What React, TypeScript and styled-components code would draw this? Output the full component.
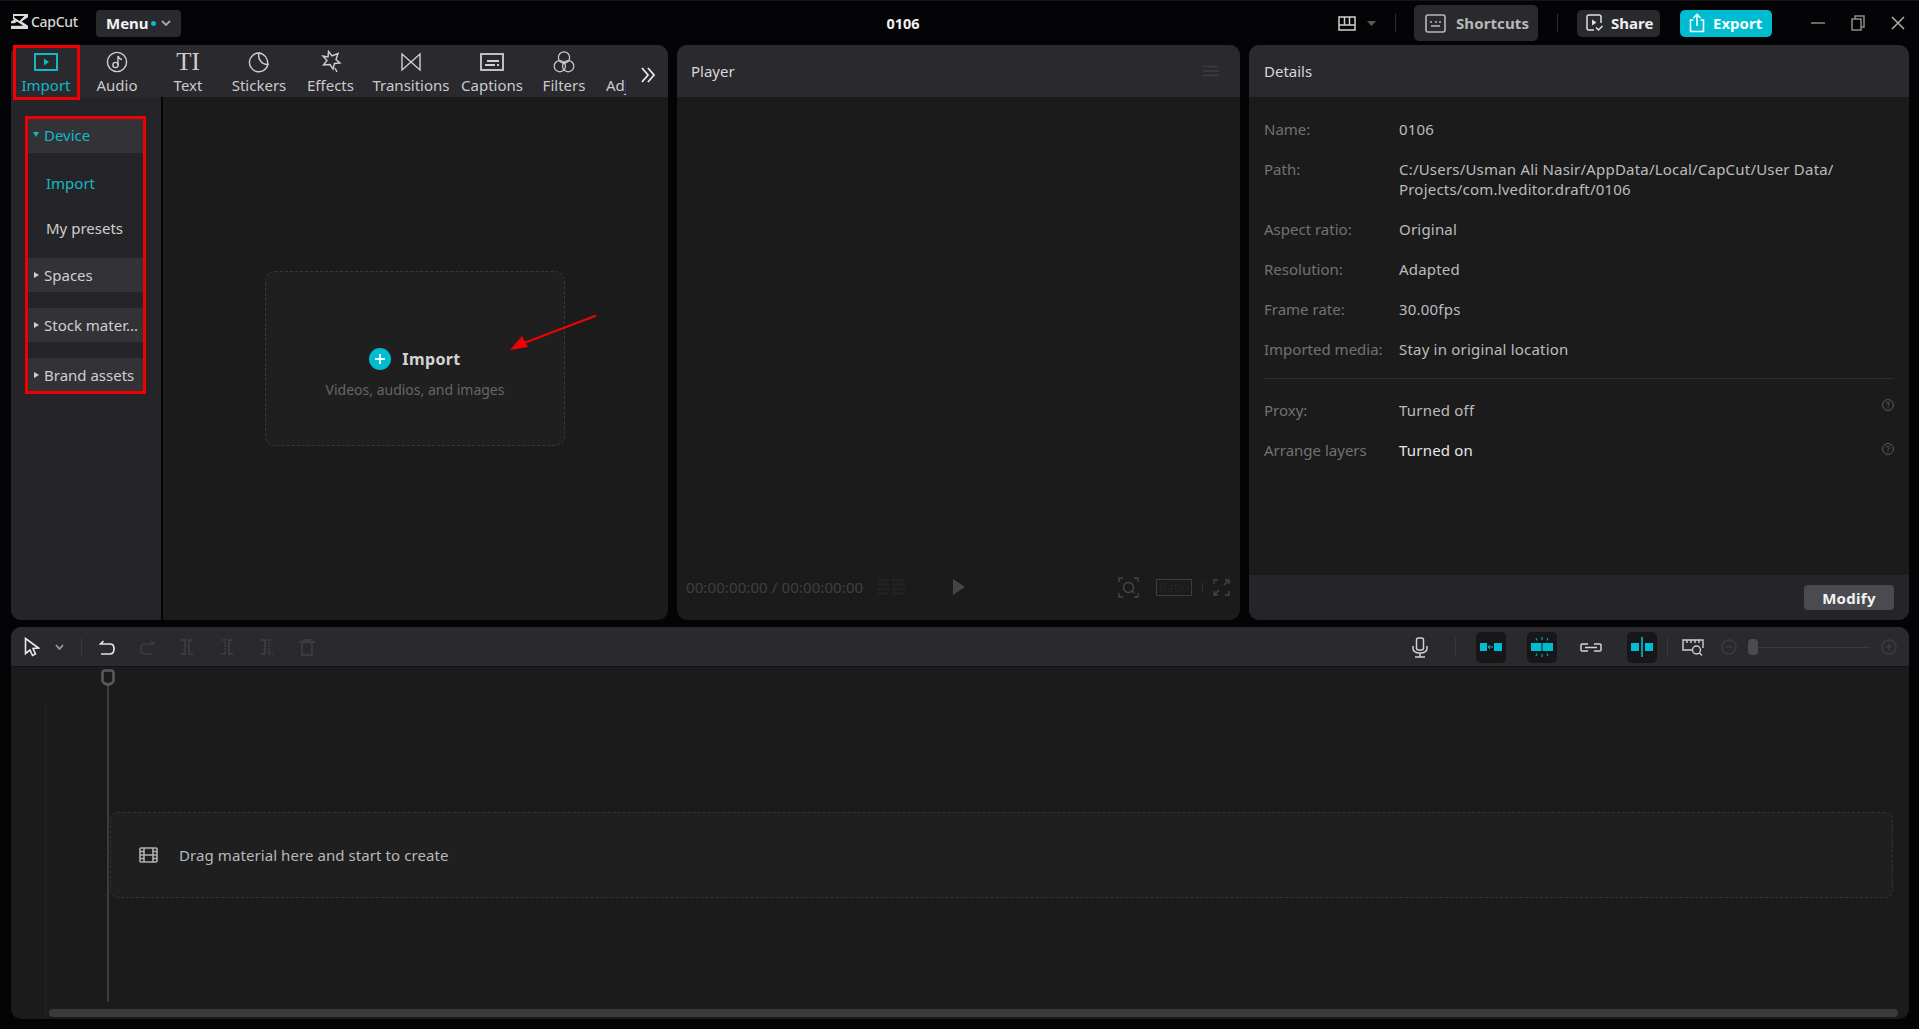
import React from 'react';
import styled, { createGlobalStyle } from 'styled-components';

const teal = '#00bcd0';
const tealText = '#12b8c6';
const font = '"Noto Sans", "Open Sans", sans-serif';

const GlobalStyle = createGlobalStyle`
  html, body { margin: 0; padding: 0; background: #040406; overflow: hidden; }
  * { box-sizing: border-box; }
  body { font-family: ${font}; font-size: 15px; color: #d0d0d0; }
`;

const Page = styled.div`
  width: 1919px;
  height: 1029px;
  background: #040406;
  display: flex;
  flex-direction: column;
`;

/* top bar */
const TopBar = styled.header`
  height: 45px;
  flex: none;
  display: flex;
  align-items: center;
  position: relative;
  border-top: 1px solid #17171a;
`;
const Brand = styled.div`
  display: flex;
  align-items: center;
  gap: 3px;
  margin: 0 0 4px 11px;
  width: 85px;
  font-size: 14px;
  font-weight: 500;
  color: #d8d8d8;
  letter-spacing: -0.3px;
`;
const MenuButton = styled.button`
  width: 85px;
  height: 27px;
  border: 0;
  border-radius: 4px;
  background: #2a2a2e;
  color: #f4f4f4;
  font: 700 15px ${font};
  display: flex;
  align-items: center;
  padding: 0 0 0 10px;
`;
const Dot = styled.span`
  width: 5px;
  height: 5px;
  border-radius: 50%;
  background: ${teal};
  margin: 0 5px 0 2px;
`;
const ProjectTitle = styled.div`
  position: absolute;
  left: 0;
  width: 1806px;
  text-align: center;
  font-weight: 700;
  font-size: 14.5px;
  color: #f0f0f0;
`;
const TopRight = styled.div`
  margin-left: auto;
  display: flex;
  align-items: center;
`;
const VSep = styled.span<{ $h?: number; $mx?: number }>`
  display: block;
  width: 1px;
  height: ${(p) => p.$h ?? 18}px;
  background: #2e2e32;
  margin: 0 ${(p) => p.$mx ?? 19}px;
`;
const CaretBox = styled.span`
  display: flex;
  margin-left: 11px;
`;
const TopButton = styled.button<{ $w: number; $h: number; $bg: string; $color: string; $ml?: number; $pl?: number; $gap?: number; $ls?: number }>`
  width: ${(p) => p.$w}px;
  height: ${(p) => p.$h}px;
  margin-left: ${(p) => p.$ml ?? 0}px;
  background: ${(p) => p.$bg};
  color: ${(p) => p.$color};
  border: 0;
  border-radius: 5px;
  font: 700 15px ${font};
  letter-spacing: ${(p) => p.$ls ?? 0}px;
  display: flex;
  align-items: center;
  gap: ${(p) => p.$gap ?? 8}px;
  padding: 0 0 0 ${(p) => p.$pl ?? 9}px;
  white-space: nowrap;
`;
const WindowControls = styled.div`
  display: flex;
  align-items: center;
  gap: 26px;
  margin: 0 14px 0 39px;
`;

/* panels */
const PanelRow = styled.main`
  height: 575px;
  flex: none;
  display: flex;
  padding-left: 11px;
  gap: 9px;
`;
const Panel = styled.section<{ $w: number }>`
  width: ${(p) => p.$w}px;
  background: #1b1b1c;
  border-radius: 10px;
  display: flex;
  flex-direction: column;
  position: relative;
`;
const PanelHeader = styled.div<{ $pl?: number; $pr?: number }>`
  height: 52px;
  flex: none;
  background: #29292e;
  border-radius: 10px 10px 0 0;
  display: flex;
  align-items: center;
  padding: 0 ${(p) => p.$pr ?? 14}px 0 ${(p) => p.$pl ?? 14}px;
  justify-content: space-between;
  font-size: 15px;
  color: #d8d8d8;
`;

/* media panel */
const TabHeader = styled.div`
  height: 52px;
  flex: none;
  background: #29292e;
  border-radius: 10px 10px 0 0;
  display: flex;
  position: relative;
`;
const TabStrip = styled.div`
  width: 618px;
  display: flex;
  clip-path: inset(0 0 -4px 0);
`;
const Tab = styled.div<{ $w: number; $active?: boolean; $marked?: boolean }>`
  width: ${(p) => p.$w}px;
  flex: none;
  position: relative;
  display: flex;
  flex-direction: column;
  align-items: center;
  color: ${(p) => (p.$active ? tealText : '#cbcbcb')};
  font-size: 15px;
  line-height: 20px;
  padding-top: 5px;
  white-space: nowrap;
  &::after {
    content: '';
    display: ${(p) => (p.$marked ? 'block' : 'none')};
    position: absolute;
    left: 2px;
    top: 0;
    right: 1px;
    bottom: -3px;
    border: 3px solid #f00000;
  }
`;
const ClippedTab = styled(Tab)`
  align-items: flex-start;
  padding-left: 6px;
  overflow: hidden;
`;
const TabIcon = styled.div`
  height: 24px;
  margin-bottom: 1px;
  display: flex;
  align-items: center;
  justify-content: center;
`;
const TextGlyph = styled.span`
  font: 400 25px/24px "Liberation Serif", serif;
  color: #cfcfcf;
`;
const MoreTabs = styled.div`
  position: absolute;
  left: 630px;
  top: 22px;
`;
const MediaBody = styled.div`
  flex: 1;
  display: flex;
  min-height: 0;
`;
const SideNav = styled.nav`
  width: 152px;
  flex: none;
  background: #252529;
  border-right: 2px solid #040406;
  border-bottom-left-radius: 10px;
  padding: 19px 0 0 14px;
`;
const NavList = styled.div`
  width: 121px;
  height: 278px;
  border: 3px solid #f00000;
  overflow: hidden;
`;
const NavGroup = styled.div<{ $open?: boolean; $mt?: number }>`
  height: 34px;
  margin-top: ${(p) => p.$mt ?? 0}px;
  background: #323237;
  color: ${(p) => (p.$open ? tealText : '#cfcfcf')};
  display: flex;
  align-items: center;
  font-size: 15px;
  white-space: nowrap;
  overflow: hidden;
  padding: 0 0 ${(p) => (p.$open ? 3 : 1)}px 5px;
  &::before {
    content: '';
    width: 0;
    height: 0;
    margin-right: 5px;
    flex: none;
    border-style: solid;
    ${(p) => (p.$open
    ? `border-width: 5px 3px 0 3px; border-color: ${tealText} transparent transparent transparent;`
    : 'border-width: 3.5px 0 3.5px 5px; border-color: transparent transparent transparent #cfcfcf; margin-left: 1px;')}
  }
`;
const NavItem = styled.div<{ $active?: boolean; $mt?: number }>`
  height: 45px;
  margin-top: ${(p) => p.$mt ?? 0}px;
  display: flex;
  align-items: center;
  padding-left: 18px;
  color: ${(p) => (p.$active ? tealText : '#cfcfcf')};
  font-size: 15px;
`;
const ImportArea = styled.div`
  flex: 1;
  position: relative;
`;
const DropZone = styled.div`
  position: absolute;
  left: 102px;
  top: 174px;
  width: 300px;
  height: 175px;
  background: #1f1f20;
  border: 1px dashed #383838;
  border-radius: 10px;
  display: flex;
  flex-direction: column;
  align-items: center;
  padding-top: 75px;
`;
const ImportLine = styled.div`
  display: flex;
  align-items: center;
  gap: 11px;
  font-weight: 700;
  font-size: 16px;
  letter-spacing: 0.4px;
  line-height: 24px;
  color: #d4d4d4;
`;
const PlusCircle = styled.span`
  width: 22px;
  height: 22px;
  border-radius: 50%;
  background: ${teal};
  display: flex;
  align-items: center;
  justify-content: center;
`;
const ImportHint = styled.div`
  margin-top: 9px;
  font-size: 14px;
  line-height: 20px;
  color: #666;
  white-space: nowrap;
`;
const ArrowMark = styled.svg`
  position: absolute;
  left: 345px;
  top: 215px;
`;

/* player */
const PlayerStage = styled.div`
  flex: 1;
`;
const PlayerBar = styled.div`
  height: 48px;
  display: flex;
  align-items: center;
  padding: 0 10px 18px 9px;
  color: #404040;
`;
const TimeText = styled.div`
  font-size: 15px;
  letter-spacing: 0.1px;
  white-space: nowrap;
  width: 192px;
  color: #3f3f3f;
`;
const PlayBox = styled.span`
  display: flex;
  margin-left: 48px;
`;
const PlayerTools = styled.div`
  margin-left: auto;
  display: flex;
  align-items: center;
`;
const RatioBox = styled.div`
  width: 36px;
  height: 17px;
  border: 1px solid #3c3c3c;
  margin-left: 17px;
  font-size: 12px;
  line-height: 15px;
  color: #252525;
  text-align: center;
`;

/* details */
const DetailsBody = styled.div`
  flex: 1;
  padding: 22px 15px 0;
`;
const InfoRow = styled.div`
  display: flex;
  margin-bottom: 20px;
  font-size: 15px;
  line-height: 20px;
  position: relative;
`;
const InfoLabel = styled.div`
  width: 135px;
  flex: none;
  color: #727272;
  white-space: nowrap;
`;
const InfoValue = styled.div<{ $bright?: boolean }>`
  color: ${(p) => (p.$bright ? '#e8e8e8' : '#bcbcbc')};
  letter-spacing: 0.2px;
`;
const InfoDivider = styled.div`
  height: 1px;
  background: #2e2e30;
  margin: -1px 0 21px;
`;
const HelpMark = styled.svg<{ $top: number }>`
  position: absolute;
  right: 0;
  top: ${(p) => p.$top}px;
`;
const DetailsFooter = styled.div`
  height: 45px;
  flex: none;
  background: #252529;
  border-radius: 0 0 10px 10px;
  display: flex;
  align-items: center;
  justify-content: flex-end;
  padding-right: 15px;
`;
const ModifyButton = styled.button`
  width: 90px;
  height: 25px;
  border: 0;
  border-radius: 4px;
  background: #4a4a50;
  color: #f2f2f2;
  font: 700 15px ${font};
  letter-spacing: 0.3px;
  padding: 0;
`;

/* timeline */
const Timeline = styled.section`
  margin: 7px 10px 0 11px;
  height: 392px;
  flex: none;
  background: #1b1b1c;
  border-radius: 10px;
  display: flex;
  flex-direction: column;
  position: relative;
  overflow: hidden;
`;
const Toolbar = styled.div`
  height: 40px;
  flex: none;
  background: #29292e;
  border-bottom: 1px solid #131315;
  display: flex;
  align-items: center;
  padding: 1px 0 0 9px;
`;
const ToolSlot = styled.div<{ $w: number; $ml?: number; $mr?: number }>`
  width: ${(p) => p.$w}px;
  margin: 0 ${(p) => p.$mr ?? 0}px 0 ${(p) => p.$ml ?? 0}px;
  flex: none;
  height: 100%;
  display: flex;
  align-items: center;
  justify-content: center;
`;
const ToolSep = styled.span<{ $ml: number; $mr: number }>`
  display: block;
  width: 1px;
  height: 18px;
  background: #3a3a3e;
  margin: 0 ${(p) => p.$mr}px 0 ${(p) => p.$ml}px;
`;
const ToolbarRight = styled.div`
  margin-left: auto;
  display: flex;
  align-items: center;
  height: 100%;
`;
const ToggleButton = styled.div<{ $ml?: number }>`
  width: 30px;
  height: 31px;
  margin-left: ${(p) => p.$ml ?? 0}px;
  border-radius: 5px;
  background: #17171a;
  display: flex;
  align-items: center;
  justify-content: center;
`;
const ZoomTrack = styled.div`
  width: 118px;
  height: 1px;
  background: #3a3a3e;
  position: relative;
`;
const ZoomThumb = styled.span`
  position: absolute;
  left: -4px;
  top: -8px;
  width: 10px;
  height: 16px;
  border-radius: 4px;
  background: #4c4c50;
`;
const TrackArea = styled.div`
  flex: 1;
  position: relative;
`;
const RulerLine = styled.div`
  position: absolute;
  left: 34px;
  top: 36px;
  bottom: 0;
  width: 1px;
  background: #232324;
`;
const Playhead = styled.div`
  position: absolute;
  left: 90px;
  top: 2px;
  width: 14px;
  height: 333px;
  display: flex;
  flex-direction: column;
  align-items: center;
`;
const PlayheadStem = styled.div`
  width: 2px;
  flex: 1;
  background: #3c3c3e;
`;
const DropTrack = styled.div`
  position: absolute;
  left: 99px;
  top: 145px;
  right: 16px;
  height: 86px;
  background: #1f1f20;
  border: 1px dashed #333;
  border-radius: 8px;
  display: flex;
  align-items: center;
  padding-left: 28px;
  gap: 21px;
  color: #b8b8b8;
  font-size: 15px;
  letter-spacing: 0.08px;
`;
const ScrollBar = styled.div`
  position: absolute;
  left: 38px;
  right: 11px;
  bottom: 2px;
  height: 8px;
  border-radius: 4px;
  background: #3a3a3d;
`;

const Ico = styled.svg`
  display: block;
  flex: none;
`;

type IconProps = { c?: string; w?: number };

const Outline = ({ w, h, c = '#d0d0d0', sw = 1.4, children }: { w: number; h: number; c?: string; sw?: number; children: React.ReactNode }) => (
  <Ico width={w} height={h} viewBox={`0 0 ${w} ${h}`} fill="none" stroke={c} strokeWidth={sw}>
    {children}
  </Ico>
);

const tabs: { label: string; w: number; icon: React.ReactNode }[] = [
  {
    label: 'Import',
    w: 70,
    icon: (
      <Outline w={24} h={18} c={tealText} sw={2}>
        <rect x="1" y="1" width="22" height="16" />
        <path d="M10 5.5 L15 9 L10 12.5 Z" fill={tealText} stroke="none" />
      </Outline>
    ),
  },
  {
    label: 'Audio',
    w: 72,
    icon: (
      <Outline w={22} h={22}>
        <circle cx="11" cy="11" r="9.6" />
        <circle cx="9.5" cy="14" r="2.6" />
        <path d="M12 14 V5 Q13 8 16 8.5" />
      </Outline>
    ),
  },
  { label: 'Text', w: 70, icon: <TextGlyph>TI</TextGlyph> },
  {
    label: 'Stickers',
    w: 72,
    icon: (
      <Outline w={22} h={22}>
        <path d="M11 2 A9.4 9.4 0 1 0 20 13.5 A9 9 0 0 1 11 2 Z" />
        <path d="M11 2 C17 3 20 8 20 13.5" />
      </Outline>
    ),
  },
  {
    label: 'Effects',
    w: 71,
    icon: (
      <Outline w={22} h={24}>
        <path d="M8.5 1.5 L12 6 L18 3.5 L16 9.5 L20 13 L14.5 13.5 L13 19 L10 14.5 L3.5 15 L7 10.5 L3 6 L8 7 Z" />
        <path d="M15 18 L17 22" />
      </Outline>
    ),
  },
  {
    label: 'Transitions',
    w: 90,
    icon: (
      <Outline w={22} h={20}>
        <path d="M2 2 L20 18 V2 L2 18 Z" />
      </Outline>
    ),
  },
  {
    label: 'Captions',
    w: 72,
    icon: (
      <Outline w={24} h={18} sw={1.8}>
        <rect x="1" y="1" width="22" height="16" />
        <path d="M7 8 H19 M5 12 H15 M17 12 H19" />
      </Outline>
    ),
  },
  {
    label: 'Filters',
    w: 72,
    icon: (
      <Outline w={22} h={24} sw={1.2}>
        <circle cx="11" cy="7.5" r="5.6" />
        <circle cx="6.8" cy="16.2" r="5.6" />
        <circle cx="15.2" cy="16.2" r="5.6" />
      </Outline>
    ),
  },
];

const LogoMark = () => (
  <Ico width={17} height={15} viewBox="0 0 17 15" fill="#dcdcdc">
    <path d="M0 0 H17 V3.2 L10.6 7.5 L17 11.8 V15 H0 V11.8 H12.4 L2 5 V0 Z M3.2 2 V3.6 L8.5 7 L13.4 2 Z" fillRule="evenodd" />
    <path d="M0 7.5 L3.4 5.4 L6.2 7.4 L3.4 9.2 H0 Z" />
  </Ico>
);

const ChevronDown = ({ c = '#a8a8a8', w = 10 }: IconProps) => (
  <Outline w={w} h={6} c={c} sw={1.8}>
    <path d={`M1 1 L${w / 2} 5 L${w - 1} 1`} />
  </Outline>
);

const SplitIcon = ({ kind }: { kind: 'both' | 'left' | 'right' }) => (
  <Outline w={14} h={16} c="#3c3c40" sw={1.8}>
    <path d="M1 1 H5 V15 H1" strokeDasharray={kind === 'left' ? '2 1' : undefined} />
    <path d="M13 1 H9 V15 H13" strokeDasharray={kind === 'right' ? '2 1' : undefined} />
  </Outline>
);

const HelpIcon = ({ top }: { top: number }) => (
  <HelpMark $top={top} width={12} height={12} viewBox="0 0 12 12" fill="none" stroke="#5c5c5c">
    <circle cx="6" cy="6" r="5.4" />
    <path d="M4.5 4.6 Q4.6 3.2 6 3.2 Q7.5 3.2 7.5 4.5 Q7.5 5.4 6 6.2 V7.2 M6 8.2 V9.2" />
  </HelpMark>
);

const infoRows: [string, React.ReactNode][] = [
  ['Name:', '0106'],
  ['Path:', <>C:/Users/Usman Ali Nasir/AppData/Local/CapCut/User Data/<br />Projects/com.lveditor.draft/0106</>],
  ['Aspect ratio:', 'Original'],
  ['Resolution:', 'Adapted'],
  ['Frame rate:', '30.00fps'],
  ['Imported media:', 'Stay in original location'],
];

export default function App() {
  return (
    <Page>
      <GlobalStyle />
      <TopBar>
        <Brand>
          <LogoMark />
          CapCut
        </Brand>
        <MenuButton>
          Menu
          <Dot />
          <ChevronDown />
        </MenuButton>
        <ProjectTitle>0106</ProjectTitle>
        <TopRight>
          <Outline w={18} h={15} sw={1.5}>
            <path d="M1 1 H17 V14 H1 Z M1 9 H17 M6.5 1 V9 M11.5 1 V9" />
          </Outline>
          <CaretBox>
            <Ico width={9} height={5} viewBox="0 0 9 5" fill="#5a5a5a">
              <path d="M0 0 H9 L4.5 5 Z" />
            </Ico>
          </CaretBox>
          <VSep $mx={18.5} />
          <TopButton $w={124} $h={36} $bg="#2a2a2e" $color="#b8b8b8" $pl={11} $gap={10} $ls={0.1}>
            <Outline w={21} h={19} c="#b8b8b8" sw={1.6}>
              <rect x="1" y="1" width="19" height="17" rx="2" />
              <path d="M5 8 H7 M10 8 H12 M14 8 H16 M6 12 H15" />
            </Outline>
            Shortcuts
          </TopButton>
          <VSep $mx={19} />
          <TopButton $w={83} $h={27} $bg="#2a2a2e" $color="#efefef">
            <Outline w={17} h={18} c="#e0e0e0" sw={1.5}>
              <path d="M8 16 H3 Q1 16 1 14 V3 Q1 1 3 1 H13 Q15 1 15 3 V9" />
              <path d="M6 5.5 L10.5 8.5 L6 11.5 Z" fill="#e0e0e0" stroke="none" />
              <path d="M10 13.5 L12.5 16 L16.5 12" />
            </Outline>
            Share
          </TopButton>
          <TopButton $w={92} $h={27} $bg={teal} $color="#f4ffff" $ml={20}>
            <Outline w={16} h={20} c="#f4ffff" sw={1.6}>
              <path d="M4.5 7 H1.5 V18.5 H14.5 V7 H11.5" />
              <path d="M8 13 V2 M4.5 5 L8 1.5 L11.5 5" />
            </Outline>
            Export
          </TopButton>
          <WindowControls>
            <Outline w={14} h={14} c="#8a8a8a" sw={1.5}>
              <path d="M0 7 H14" />
            </Outline>
            <Outline w={14} h={16} c="#8a8a8a" sw={1.5}>
              <rect x="1" y="4" width="9" height="11" />
              <path d="M4 4 V1 H13 V12 H10" />
            </Outline>
            <Outline w={14} h={14} c="#b0b0b0" sw={1.5}>
              <path d="M1 1 L13 13 M13 1 L1 13" />
            </Outline>
          </WindowControls>
        </TopRight>
      </TopBar>

      <PanelRow>
        <Panel $w={657}>
          <TabHeader>
            <TabStrip>
              {tabs.map((t, i) => (
                <Tab key={t.label} $w={t.w} $active={i === 0} $marked={i === 0}>
                  <TabIcon>{t.icon}</TabIcon>
                  {t.label}
                </Tab>
              ))}
              <ClippedTab $w={26}>
                <TabIcon />
                Adjustment
              </ClippedTab>
            </TabStrip>
            <MoreTabs>
              <Outline w={15} h={16} c="#e8e8e8" sw={1.8}>
                <path d="M1 1 L7 8 L1 15 M7 1 L13 8 L7 15" />
              </Outline>
            </MoreTabs>
          </TabHeader>
          <MediaBody>
            <SideNav>
              <NavList>
                <NavGroup $open>Device</NavGroup>
                <NavItem $active $mt={7}>Import</NavItem>
                <NavItem>My presets</NavItem>
                <NavGroup $mt={8}>Spaces</NavGroup>
                <NavGroup $mt={16}>Stock mater...</NavGroup>
                <NavGroup $mt={16}>Brand assets</NavGroup>
              </NavList>
            </SideNav>
            <ImportArea>
              <DropZone>
                <ImportLine>
                  <PlusCircle>
                    <Outline w={12} h={12} c="#f0ffff" sw={1.8}>
                      <path d="M6 1 V11 M1 6 H11" />
                    </Outline>
                  </PlusCircle>
                  Import
                </ImportLine>
                <ImportHint>Videos, audios, and images</ImportHint>
              </DropZone>
              <ArrowMark width={90} height={40} viewBox="0 0 90 40">
                <path d="M87 4 L16 31" stroke="#f00000" strokeWidth="2.4" strokeLinecap="round" />
                <path d="M2 38 L14 24 L20 35 Z" fill="#f00000" />
              </ArrowMark>
            </ImportArea>
          </MediaBody>
        </Panel>

        <Panel $w={563}>
          <PanelHeader $pr={21}>
            Player
            <Outline w={16} h={12} c="#3f3f42" sw={1.5}>
              <path d="M0 1.5 H16 M0 6 H16 M0 10.5 H16" />
            </Outline>
          </PanelHeader>
          <PlayerStage />
          <PlayerBar>
            <TimeText>00:00:00:00 / 00:00:00:00</TimeText>
            <Outline w={27} h={20} c="#232325" sw={2.4}>
              <path d="M0 3 H11 M0 7.5 H11 M0 12 H11 M0 16.5 H11 M14 3 H27 M14 7.5 H27 M14 12 H27 M14 16.5 H27" />
            </Outline>
            <PlayBox>
              <Ico width={12} height={16} viewBox="0 0 12 16" fill="#454545">
                <path d="M0 0 L12 8 L0 16 Z" />
              </Ico>
            </PlayBox>
            <PlayerTools>
              <Outline w={21} h={21} c="#454545" sw={1.4}>
                <path d="M1 5 V1 H5 M16 1 H20 V5 M20 16 V20 H16 M5 20 H1 V16" />
                <circle cx="10.5" cy="10.5" r="5" />
                <path d="M14 14 L16 16" />
              </Outline>
              <RatioBox>Ratio</RatioBox>
              <VSep $h={10} $mx={10} />
              <Outline w={17} h={17} c="#454545" sw={1.4}>
                <path d="M1 5 V1 H5 M12 1 H16 V5 M16 12 V16 H12 M5 16 H1 V12 M11 6 L15 2 M6 11 L2 15" />
              </Outline>
            </PlayerTools>
          </PlayerBar>
        </Panel>

        <Panel $w={660}>
          <PanelHeader $pl={15}>Details</PanelHeader>
          <DetailsBody>
            {infoRows.map(([label, value]) => (
              <InfoRow key={label}>
                <InfoLabel>{label}</InfoLabel>
                <InfoValue>{value}</InfoValue>
              </InfoRow>
            ))}
            <InfoDivider />
            <InfoRow>
              <InfoLabel>Proxy:</InfoLabel>
              <InfoValue>Turned off</InfoValue>
              <HelpIcon top={-1} />
            </InfoRow>
            <InfoRow>
              <InfoLabel>Arrange layers</InfoLabel>
              <InfoValue $bright>Turned on</InfoValue>
              <HelpIcon top={3} />
            </InfoRow>
          </DetailsBody>
          <DetailsFooter>
            <ModifyButton>Modify</ModifyButton>
          </DetailsFooter>
        </Panel>
      </PanelRow>

      <Timeline>
        <Toolbar>
          <ToolSlot $w={24}>
            <Outline w={16} h={20} c="#e8e8e8" sw={1.6}>
              <path d="M1.5 1.5 L14.5 11 L9 11.5 L11.5 17 L8.5 18.5 L6 13 L1.5 16.5 Z" />
            </Outline>
          </ToolSlot>
          <ToolSlot $w={30}><ChevronDown c="#9a9a9a" w={9} /></ToolSlot>
          <ToolSep $ml={7} $mr={5} />
          <ToolSlot $w={40}>
            <Outline w={16} h={15} c="#e4e4e4" sw={1.7}>
              <path d="M4.5 1 L1.5 4 H11 Q15 4 15 8.5 Q15 14 11 14 H2" />
            </Outline>
          </ToolSlot>
          <ToolSlot $w={40}>
            <Outline w={15} h={15} c="#3c3c40" sw={1.7}>
              <path d="M11 1 L14 4 H5 Q1 4 1 8.5 Q1 14 5 14 H13" />
            </Outline>
          </ToolSlot>
          <ToolSlot $w={40}><SplitIcon kind="both" /></ToolSlot>
          <ToolSlot $w={40}><SplitIcon kind="left" /></ToolSlot>
          <ToolSlot $w={40}><SplitIcon kind="right" /></ToolSlot>
          <ToolSlot $w={40}>
            <Outline w={16} h={17} c="#3c3c40" sw={1.8}>
              <path d="M0 3 H16 M3 3 V16 H13 V3 M5 3 V1 H11 V3" />
            </Outline>
          </ToolSlot>
          <ToolbarRight>
            <ToolSlot $w={30}>
              <Outline w={16} h={21} c="#cfcfcf" sw={1.5}>
                <rect x="4.5" y="1" width="7" height="12" rx="2" />
                <path d="M1 9 V11 Q1 16 8 16 Q15 16 15 11 V9 M8 16 V20 M3 20 H13" />
              </Outline>
            </ToolSlot>
            <ToolSep $ml={20} $mr={20} />
            <ToggleButton>
              <Ico width={22} height={10} viewBox="0 0 22 10">
                <rect x="0" y="1" width="7" height="8" fill={teal} />
                <rect x="14" y="1" width="8" height="8" fill={teal} />
                <path d="M8 5 H13 M10 3 L8 5 L10 7" stroke={teal} fill="none" />
              </Ico>
            </ToggleButton>
            <ToggleButton $ml={21}>
              <Ico width={22} height={20} viewBox="0 0 22 20">
                <rect x="0" y="6" width="10.5" height="8" fill={teal} />
                <rect x="11.5" y="6" width="10.5" height="8" fill={teal} />
                <path d="M5 1 L6 3.5 M11 0 V3 M17 1 L16 3.5 M5 19 L6 16.5 M11 20 V17 M17 19 L16 16.5" stroke={teal} fill="none" />
              </Ico>
            </ToggleButton>
            <ToolSlot $w={30} $ml={19}>
              <Outline w={22} h={9} c="#d4d4d4" sw={1.5}>
                <path d="M8 1 H2 Q1 1 1 2 V7 Q1 8 2 8 H8 M14 1 H20 Q21 1 21 2 V7 Q21 8 20 8 H14 M5 4.5 H17" />
              </Outline>
            </ToolSlot>
            <ToggleButton $ml={21}>
              <Ico width={22} height={20} viewBox="0 0 22 20">
                <rect x="0" y="6" width="8" height="8" fill={teal} />
                <rect x="14" y="6" width="8" height="8" fill={teal} />
                <rect x="10.2" y="0" width="1.6" height="20" fill={teal} />
              </Ico>
            </ToggleButton>
            <ToolSep $ml={10} $mr={10} />
            <ToolSlot $w={30} $ml={0}>
              <Outline w={22} h={17} c="#cfcfcf" sw={1.4}>
                <path d="M11 11 H1 V1 H21 V9 M5 1 V4 M9 1 V4 M13 1 V4 M17 1 V4" />
                <circle cx="14.5" cy="11" r="4" />
                <path d="M17.5 14 L20 16.5" />
              </Outline>
            </ToolSlot>
            <ToolSlot $w={30} $ml={5.5} $mr={2.5}>
              <Outline w={16} h={16} c="#3c3c40" sw={1.5}>
                <circle cx="8" cy="8" r="7" />
                <path d="M5 8 H11" />
              </Outline>
            </ToolSlot>
            <ToolSlot $w={130}>
              <ZoomTrack><ZoomThumb /></ZoomTrack>
            </ToolSlot>
            <ToolSlot $w={16} $ml={5} $mr={12}>
              <Outline w={16} h={16} c="#3c3c40" sw={1.5}>
                <circle cx="8" cy="8" r="7" />
                <path d="M5 8 H11 M8 5 V11" />
              </Outline>
            </ToolSlot>
          </ToolbarRight>
        </Toolbar>
        <TrackArea>
          <RulerLine />
          <Playhead>
            <Outline w={14} h={17} c="#5a5a5c" sw={2.6}>
              <path d="M1.5 4 Q1.5 1.5 4 1.5 H10 Q12.5 1.5 12.5 4 V12 Q12.5 13 11 14 L7 16 L3 14 Q1.5 13 1.5 12 Z" />
            </Outline>
            <PlayheadStem />
          </Playhead>
          <DropTrack>
            <Outline w={19} h={16} c="#b0b0b0" sw={1.6}>
              <rect x="1" y="1" width="17" height="14" rx="1" />
              <path d="M5 1 V15 M14 1 V15 M1 8 H18 M1 4.5 H5 M1 11.5 H5 M14 4.5 H18 M14 11.5 H18" />
            </Outline>
            Drag material here and start to create
          </DropTrack>
          <ScrollBar />
        </TrackArea>
      </Timeline>
    </Page>
  );
}
